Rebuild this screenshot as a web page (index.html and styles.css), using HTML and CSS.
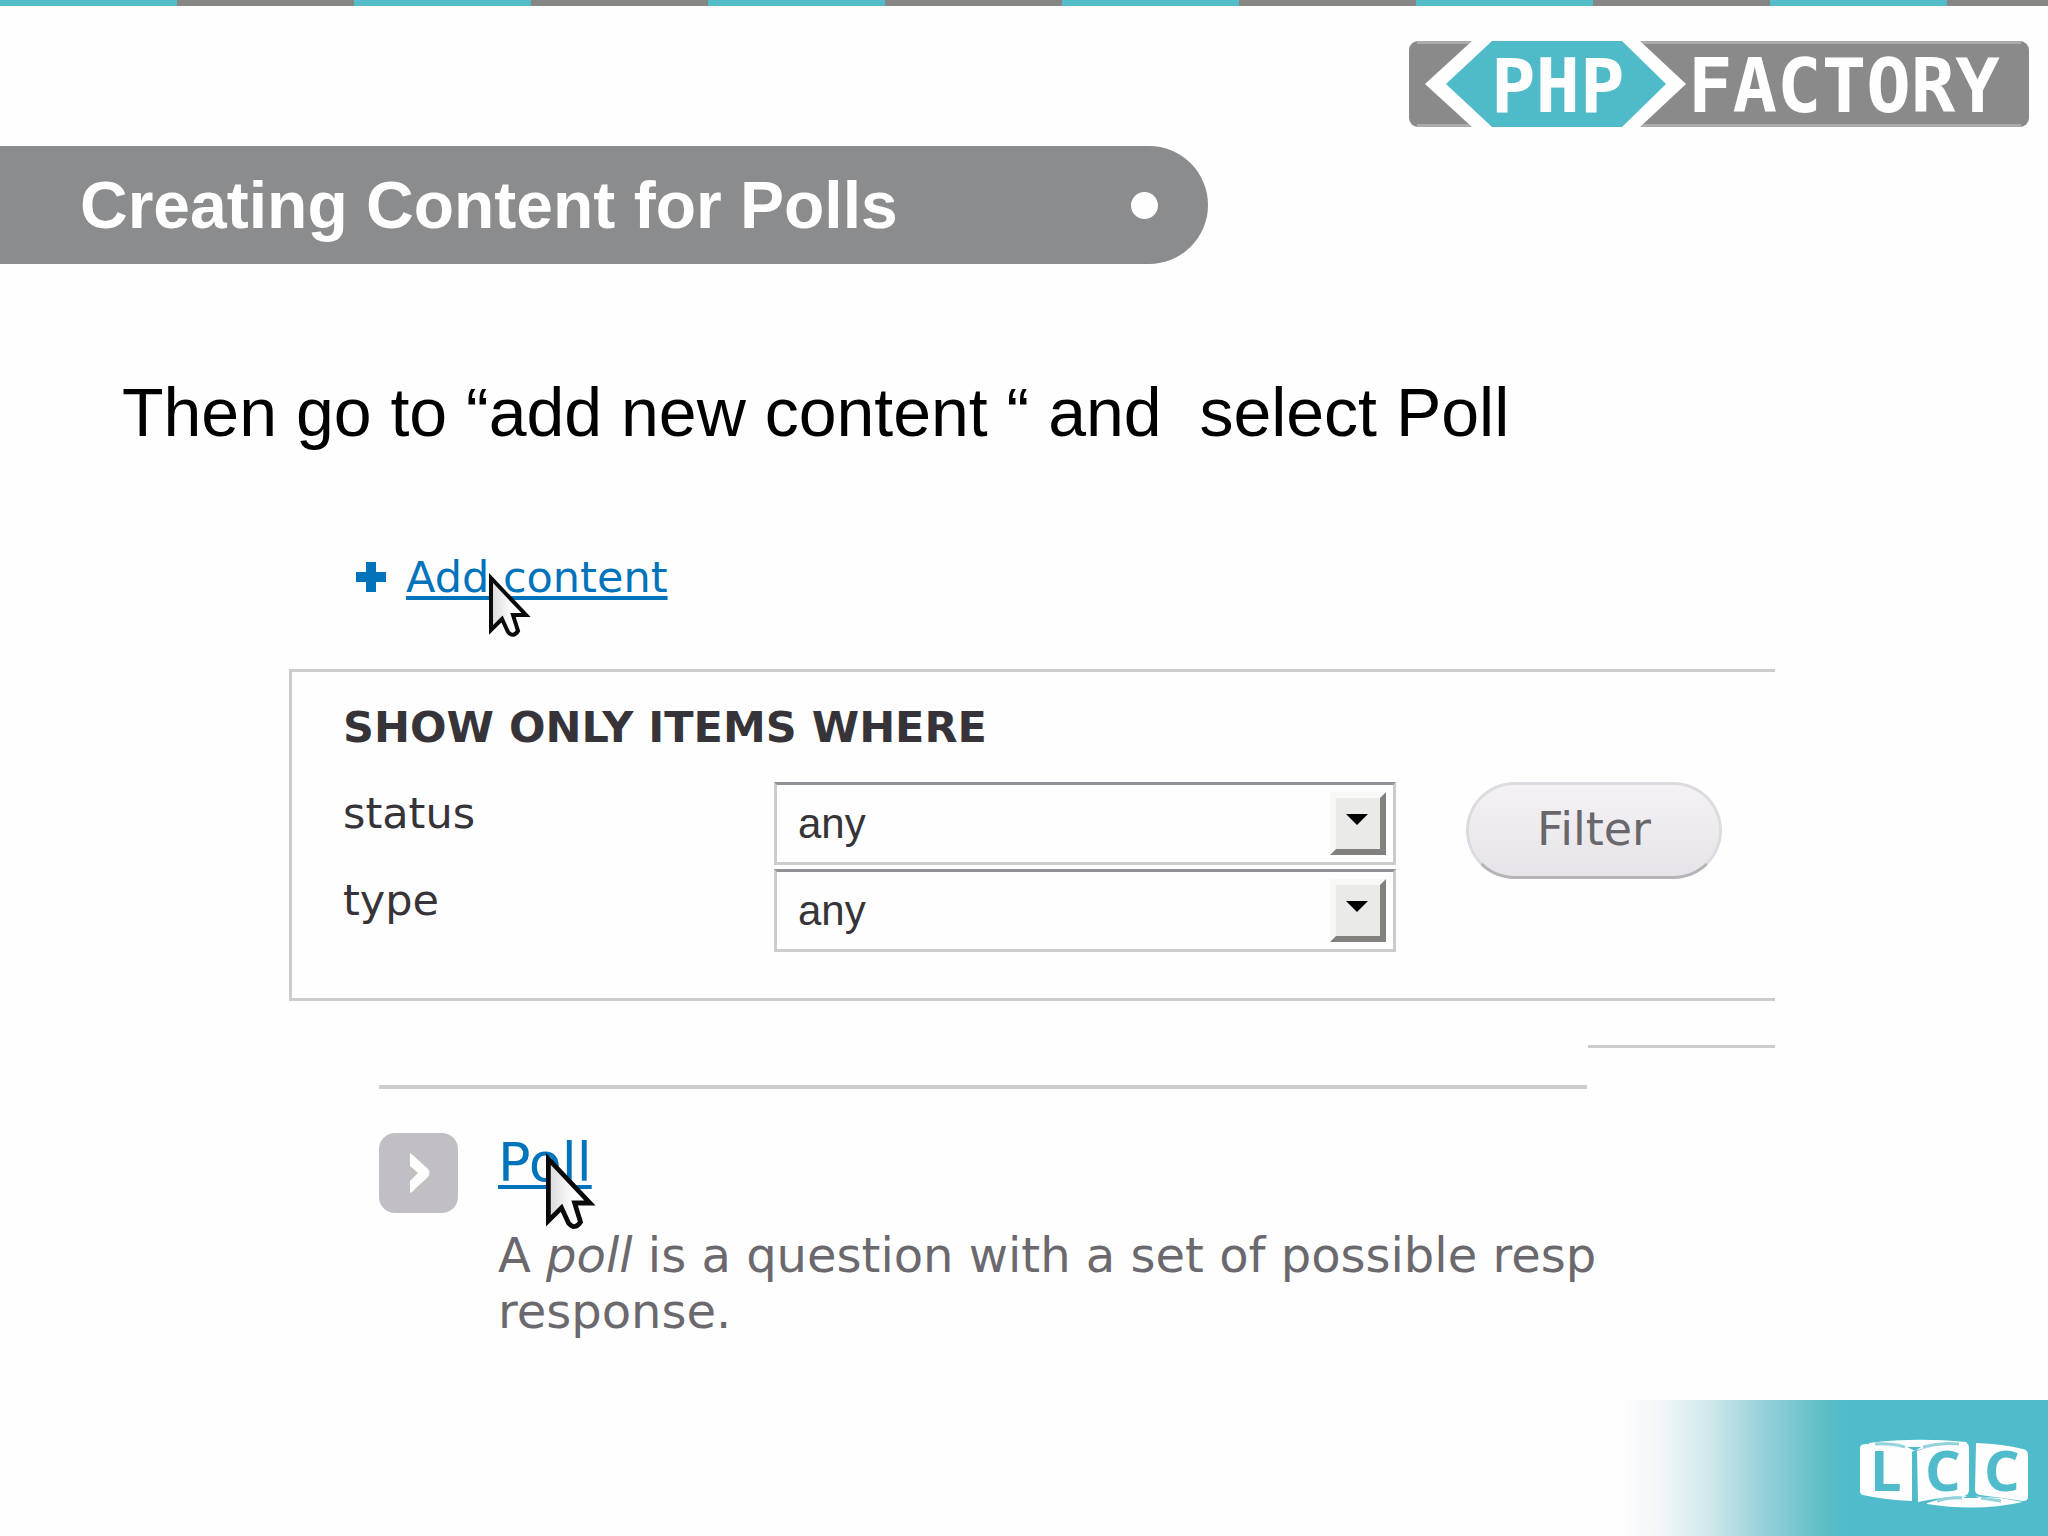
FILE: index.html
```html
<!DOCTYPE html>
<html lang="en">
<head>
  <meta charset="UTF-8">
  <title>Creating Content for Polls</title>
  <link rel="stylesheet" href="styles.css">
</head>
<body>

<div class="stripes"></div>

<header>
  <svg class="logo" width="620" height="86" viewBox="0 0 620 86" role="img" aria-label="PHP Factory">
    <rect width="620" height="86" rx="9" fill="#8a8a8a"/>
    <path d="M8 1.500H612M8 84.500H612" stroke="#aaaaaa" stroke-width="3"/>
    <path d="M63 0H231L277 43L231 86H63L16 43Z" fill="#fefefe"/>
    <path d="M83 0H213L257 43L213 86H83L37 43Z" fill="#50bbc8"/>
    <text class="logo-text" x="82" y="71">PHP</text>
    <text class="logo-text" x="279" y="71">FACTORY</text>
  </svg>
</header>

<h1 class="title">Creating Content for Polls <span class="dot"></span></h1>

<main>
  <p class="intro">Then go to “add new content “ and&nbsp; select Poll</p>

  <div class="add-row">
    <svg width="30" height="30" viewBox="0 0 30 30"><path d="M10 0H20V10H30V20H20V30H10V20H0V10H10Z" fill="#0073ba"/></svg>
    <a href="#">Add content
      <svg class="cursor" viewBox="0 0 42 66">
        <use href="#pointer"/>
      </svg>
    </a>
  </div>

  <form class="filter">
    <h2>SHOW ONLY ITEMS WHERE</h2>
    <div class="fields">
      <label for="status">status</label>
      <span class="select-box">
        <select id="status"><option>any</option></select>
        <span class="arrow"></span>
      </span>
      <button type="button">Filter</button>
      <label for="type">type</label>
      <span class="select-box">
        <select id="type"><option>any</option></select>
        <span class="arrow"></span>
      </span>
    </div>
  </form>
  <div class="rule"></div>

  <section class="poll">
    <svg class="bullet" width="79" height="80" viewBox="0 0 79 80">
      <rect width="79" height="80" rx="16" fill="#c1bfc3"/>
      <path d="M31 20Q34 22 38 26L48 35Q53 40 48 45L38 54Q35 58 31 60V48L39 40L31 33Z" fill="#fefefe"/>
    </svg>
    <div class="poll-text">
      <a href="#">Poll
        <svg class="cursor" viewBox="0 0 42 66">
          <use href="#pointer"/>
        </svg>
      </a>
      <p>A <em>poll</em> is a question with a set of possible resp<br>response.</p>
    </div>
  </section>
</main>

<footer>
  <svg width="170" height="68" viewBox="0 0 170 68" role="img" aria-label="LCC">
    <path d="M10 3Q56 -3 108 2L104 8Q80 5 62 9L52 12Q30 4 10 5Z" fill="#fefefe"/>
    <path d="M68 63Q90 56 108 56L142 58L164 62Q118 72 68 64Z" fill="#fefefe"/>
    <path d="M1 8Q1 4 7 4Q32 5 53 11V61Q26 60 4 55Q1 54 1 51Z" fill="#fefefe"/>
    <path d="M58 11Q80 3 106 3Q110 3 110 8V50Q110 55 105 56Q82 57 59 62Z" fill="#fefefe"/>
    <path d="M117 3Q144 4 164 9Q169 10 169 15V57Q169 61 164 61Q138 57 121 55Q116 54 116 50Z" fill="#fefefe"/>
    <path d="M16 4Q32 3 46 7M64 7Q82 2 100 4M78 61Q92 57 103 58M122 58L142 61" stroke="#93d3dc" stroke-width="3" fill="none"/>
    <path d="M48 7L62 7L56 11Z" fill="#50bccb"/>
    <path d="M104 58L112 54L120 58Z" fill="#50bccb"/>
    <text class="lcc-text" x="11" y="51">L</text>
    <text class="lcc-text" x="66" y="51">C</text>
    <text class="lcc-text" x="125" y="51">C</text>
  </svg>
</footer>

<!-- mouse pointer shared by both links -->
<svg class="defs" width="0" height="0">
  <defs>
    <linearGradient id="shade" x1="0" y1="0" x2="1" y2="0">
      <stop offset="0" stop-color="#d8d8dc"/>
      <stop offset="0.6" stop-color="#ffffff"/>
    </linearGradient>
    <path id="pointer" d="M2 5V57L13 46L19 59Q24 65 29 58L24 42H37Z" fill="url(#shade)" stroke="#0a0a0a" stroke-width="4"/>
  </defs>
</svg>

</body>
</html>
```

FILE: styles.css
```css
* {
  box-sizing: border-box;
}
body {
  margin: 0;
  min-height: 100vh;
  display: flex;
  flex-direction: column;
  background-color: #fefefe;
  font-family: "DejaVu Sans", sans-serif;
  font-size: 43px;
  line-height: 50px;
  color: #363439;
}
h1, h2, p {
  margin: 0;
}
svg {
  display: block;
  overflow: visible;
}
.stripes {
  height: 6px;
  background: repeating-linear-gradient(to right, #54bbc8 0 177px, #868784 177px 354px);
}
header {
  display: flex;
  justify-content: flex-end;
  padding: 35px 19px 19px;
}
.logo-text {
  font-family: "DejaVu Sans Mono", monospace;
  font-size: 74px;
  font-weight: bold;
  fill: #fefefe;
}
.title {
  display: flex;
  align-items: center;
  justify-content: space-between;
  width: 59%;
  height: 118px;
  padding: 0 50px 0 80px;
  background-color: #8b8c8e;
  border-radius: 0 59px 59px 0;
  color: #fefefe;
  font-family: "Liberation Sans Narrow", "Liberation Sans", sans-serif;
  font-size: 66px;
  white-space: nowrap;
}
.dot {
  width: 27px;
  height: 27px;
  border-radius: 50%;
  background-color: #fefefe;
}
main {
  flex: 1;
}
.intro {
  margin-top: 110px;
  padding-left: 122px;
  font-family: "Liberation Sans", sans-serif;
  font-size: 68px;
  line-height: 76px;
  color: #000;
}
a {
  position: relative;
  color: #0073ba;
  text-decoration-thickness: 4px;
  text-underline-offset: 4px;
  text-decoration-skip-ink: none;
}
.cursor {
  position: absolute;
  top: 21px;
  left: 83px;
  width: 42px;
}
.add-row {
  display: flex;
  align-items: center;
  gap: 20px;
  margin-top: 102px;
  padding-left: 356px;
}
.filter {
  margin: 67px 273px 0 289px;
  padding: 30px 0 46px 51px;
  border: 3px solid #cdcbce;
  border-right: none;
}
.filter h2 {
  font-size: 43px;
  line-height: 50px;
}
.fields {
  display: grid;
  grid-template-columns: 431px 622px 256px;
  row-gap: 4px;
  margin-top: 30px;
}
.fields label {
  padding-top: 6px;
}
.select-box {
  position: relative;
  height: 83px;
}
select {
  appearance: none;
  width: 100%;
  height: 100%;
  padding: 0 21px;
  border: 3px solid #cdcbce;
  border-top-color: #949196;
  border-radius: 0;
  background-color: #fefefe;
  font-family: "Liberation Sans", sans-serif;
  font-size: 42px;
  color: #363439;
}
.arrow {
  position: absolute;
  top: 10px;
  right: 10px;
  width: 56px;
  height: 63px;
  border: 6px solid #f8f8f6;
  border-right-color: #82817e;
  border-bottom-color: #82817e;
  background-color: #eaeae7;
  pointer-events: none;
}
.arrow::after {
  content: "";
  position: absolute;
  top: 16px;
  left: 10px;
  border: 11px solid transparent;
  border-top-color: #000;
  border-bottom: none;
}
button {
  height: 97px;
  margin-left: 70px;
  margin-right: -70px;
  padding: 0 0 4px;
  grid-row: span 2;
  border: 3px solid #dddbdf;
  border-bottom-color: #b5b3b7;
  border-radius: 49px;
  background: linear-gradient(#f4f2f5, #e6e4e8);
  font-family: "DejaVu Sans", sans-serif;
  font-size: 46px;
  color: #69676b;
}
.rule {
  width: 187px;
  height: 3px;
  margin: 44px 273px 0 auto;
  background-color: #cdcbce;
}
.poll {
  display: flex;
  gap: 40px;
  margin: 37px 461px 0 379px;
  padding-top: 44px;
  border-top: 4px solid #cdcbce;
  color: #6b696d;
}
.poll-text {
  font-size: 48px;
  line-height: 56px;
  white-space: nowrap;
}
.poll-text a {
  display: inline-block;
  font-size: 54px;
  line-height: 60px;
}
.poll-text p {
  margin-top: 34px;
}
.poll-text .cursor {
  top: 20px;
  left: 48px;
  width: 50px;
}
footer {
  display: flex;
  justify-content: flex-end;
  height: 136px;
  padding: 40px 19px 0;
  background: linear-gradient(to left, #50bccb 0 200px, #5bbdc5 222px, #97d1da 285px, #cfe8ea 338px, #f0f6f8 385px, #fefefe 430px);
}
.lcc-text {
  font-family: "Open Sans", sans-serif;
  font-size: 56px;
  font-weight: bold;
  fill: #50bccb;
}
.defs {
  position: absolute;
}
```
